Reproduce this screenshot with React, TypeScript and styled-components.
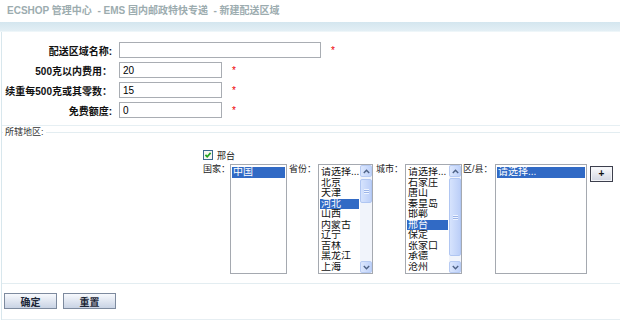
import styled, { createGlobalStyle } from "styled-components";

const GlobalStyle = createGlobalStyle`
  html, body {
    margin: 0;
    padding: 0;
    background: #fff;
  }
  body {
    font-family: "Liberation Sans", "Noto Sans CJK SC", sans-serif;
    font-size: 10px;
    color: #000;
    overflow: hidden;
  }
`;

const Title = styled.h1`
  margin: 0;
  height: 22px;
  padding-left: 7px;
  font-size: 10px;
  line-height: 22px;
  font-weight: bold;
  color: #9cacaf;
  white-space: pre;
`;

const Band = styled.div`
  height: 9px;
  background: linear-gradient(#d4e6ef, #e3eff5);
  border-bottom: 1px solid #eef6f9;
`;

const Panel = styled.div`
  margin-left: 1px;
  border-left: 1px solid #d8e7ed;
  padding-top: 8px;
`;

const FormGrid = styled.div`
  display: grid;
  grid-template-columns: 110px auto;
  column-gap: 7px;
  grid-auto-rows: 20px;
  align-items: center;
  padding-bottom: 5px;
  border-bottom: 1px solid #e6eff3;
`;

const FieldLabel = styled.div`
  text-align: right;
  font-weight: bold;
  font-size: 10px;
  color: #111;
  white-space: nowrap;
`;

const FieldCell = styled.div`
  display: flex;
  align-items: center;
`;

const TextInput = styled.input<{ $w: number }>`
  box-sizing: border-box;
  width: ${(p) => p.$w}px;
  height: 16px;
  margin: 0;
  border: 1px solid #a9adb3;
  padding: 0 3px;
  font: 10px "Liberation Sans", sans-serif;
  color: #000;
  background: #fff;
  outline: none;
`;

const Required = styled.span`
  margin-left: 10px;
  color: #e00;
  font-size: 10px;
`;

const Area = styled.fieldset`
  margin: 0;
  padding: 12px 0 9px;
  border: none;
  border-top: 1px solid #e3edf1;
  border-bottom: 1px solid #e3edf1;
`;

const Legend = styled.legend`
  margin-left: 1px;
  padding: 0 2px;
  font-size: 9px;
  line-height: 12px;
  color: #333;
`;

const RegionBlock = styled.div`
  margin-left: 201px;
`;

const CheckRow = styled.label`
  display: flex;
  align-items: center;
  gap: 4px;
  height: 10px;
  margin-bottom: 4px;
  font-size: 9px;
  color: #222;
`;

const RegionRow = styled.div`
  display: flex;
  align-items: flex-start;
`;

const RegionLabel = styled.div<{ $w: number; $pad: number }>`
  box-sizing: border-box;
  width: ${(p) => p.$w}px;
  padding-left: ${(p) => p.$pad}px;
  font-size: 9px;
  line-height: 10px;
  white-space: nowrap;
  color: #222;
`;

const ListBox = styled.div<{ $w: number }>`
  box-sizing: border-box;
  display: flex;
  width: ${(p) => p.$w}px;
  height: 110px;
  border: 1px solid #a5a9b0;
  background: #fff;
  overflow: hidden;
`;

const Options = styled.div`
  flex: 1;
  min-width: 0;
  padding: 2px 1px 0 1px;
`;

const Option = styled.div<{ $selected?: boolean }>`
  height: 10.56px;
  line-height: 10.56px;
  padding-left: 1px;
  font-size: 10px;
  white-space: nowrap;
  overflow: hidden;
  background: ${(p) => (p.$selected ? "#316ac5" : "transparent")};
  color: ${(p) => (p.$selected ? "#fff" : "#111")};
`;

const ScrollBar = styled.div`
  display: flex;
  flex-direction: column;
  width: 12px;
  background: #f1f4fb;
`;

const ScrollButton = styled.div`
  box-sizing: border-box;
  display: flex;
  align-items: center;
  justify-content: center;
  height: 12px;
  border: 1px solid #b7cbf3;
  border-radius: 2px;
  background: linear-gradient(90deg, #dce7fd, #bfd2fa);
`;

const Track = styled.div`
  flex: 1;
`;

const Thumb = styled.div<{ $top: number; $h: number }>`
  box-sizing: border-box;
  margin-top: ${(p) => p.$top}px;
  height: ${(p) => p.$h}px;
  border: 1px solid #b0c6f2;
  border-radius: 2px;
  background: linear-gradient(90deg, #d6e3fd, #bccff8);
  display: flex;
  align-items: center;
  justify-content: center;
`;

const Grip = styled.div`
  width: 5px;
  height: 5px;
  background: repeating-linear-gradient(#eef4ff 0 1px, #9cb4e8 1px 2px);
`;

const PlusButton = styled.button`
  box-sizing: border-box;
  margin: 2px 0 0 3px;
  width: 23px;
  height: 16px;
  padding: 0;
  border: 1px solid #3d3f4d;
  box-shadow: inset 0 0 0 1px #f4f5f8;
  background: linear-gradient(#fbfbfd, #d3d7e3);
  font: bold 10px "Liberation Sans", sans-serif;
  line-height: 12px;
  color: #111;
`;

const ButtonBar = styled.div`
  display: flex;
  gap: 6px;
  padding: 9px 2px 10px;
  border-bottom: 1px solid #e6eef2;
`;

const ActionButton = styled.button`
  box-sizing: border-box;
  width: 53px;
  height: 16px;
  padding: 0;
  border: 1px solid #7d8a9e;
  background: linear-gradient(#f7f9fd, #c9d3e4);
  font: bold 10px "Liberation Sans", "Noto Sans CJK SC", sans-serif;
  color: #1c2636;
`;

type ListProps = {
  width: number;
  items: string[];
  selected: number;
  thumb?: { top: number; h: number };
};

function Arrow({ up }: { up?: boolean }) {
  return (
    <svg width="7" height="5" viewBox="0 0 7 5">
      <path
        d={up ? "M0.8 4 L3.5 1.3 L6.2 4" : "M0.8 1 L3.5 3.7 L6.2 1"}
        stroke="#4d6185"
        strokeWidth="1.4"
        fill="none"
      />
    </svg>
  );
}

function RegionList({ width, items, selected, thumb }: ListProps) {
  return (
    <ListBox $w={width}>
      <Options>
        {items.map((item, i) => (
          <Option key={item} $selected={i === selected}>
            {item}
          </Option>
        ))}
      </Options>
      {thumb && (
        <ScrollBar>
          <ScrollButton>
            <Arrow up />
          </ScrollButton>
          <Track>
            <Thumb $top={thumb.top} $h={thumb.h}>
              <Grip />
            </Thumb>
          </Track>
          <ScrollButton>
            <Arrow />
          </ScrollButton>
        </ScrollBar>
      )}
    </ListBox>
  );
}

function CheckMark() {
  return (
    <svg width="10" height="10" viewBox="0 0 10 10">
      <rect x="0.5" y="0.5" width="9" height="9" fill="#f6f6f2" stroke="#3b6a8f" />
      <path d="M2.4 4.8 L4.2 6.7 L7.6 2.9" stroke="#22a322" strokeWidth="1.7" fill="none" />
    </svg>
  );
}

const provinces = ["请选择...", "北京", "天津", "河北", "山西", "内蒙古", "辽宁", "吉林", "黑龙江", "上海"];
const cities = ["请选择...", "石家庄", "唐山", "秦皇岛", "邯郸", "邢台", "保定", "张家口", "承德", "沧州"];

export default function App() {
  return (
    <>
      <GlobalStyle />
      <Title>ECSHOP 管理中心  - EMS 国内邮政特快专递  - 新建配送区域</Title>
      <Band />
      <Panel>
        <FormGrid>
          <FieldLabel>配送区域名称:</FieldLabel>
          <FieldCell>
            <TextInput $w={202} defaultValue="" />
            <Required>*</Required>
          </FieldCell>
          <FieldLabel>500克以内费用：</FieldLabel>
          <FieldCell>
            <TextInput $w={103} defaultValue="20" />
            <Required>*</Required>
          </FieldCell>
          <FieldLabel>续重每500克或其零数：</FieldLabel>
          <FieldCell>
            <TextInput $w={103} defaultValue="15" />
            <Required>*</Required>
          </FieldCell>
          <FieldLabel>免费额度:</FieldLabel>
          <FieldCell>
            <TextInput $w={103} defaultValue="0" />
            <Required>*</Required>
          </FieldCell>
        </FormGrid>

        <Area>
          <Legend>所辖地区:</Legend>
          <RegionBlock>
            <CheckRow>
              <CheckMark />
              邢台
            </CheckRow>
            <RegionRow>
              <RegionLabel $w={27} $pad={0}>国家：</RegionLabel>
              <RegionList width={57} items={["中国"]} selected={0} />
              <RegionLabel $w={31} $pad={2}>省份：</RegionLabel>
              <RegionList width={55} items={provinces} selected={3} thumb={{ top: 2, h: 24 }} />
              <RegionLabel $w={32} $pad={3}>城市：</RegionLabel>
              <RegionList width={57} items={cities} selected={5} thumb={{ top: 1, h: 78 }} />
              <RegionLabel $w={33} $pad={1}>区/县：</RegionLabel>
              <RegionList width={92} items={["请选择..."]} selected={0} />
              <PlusButton>+</PlusButton>
            </RegionRow>
          </RegionBlock>
        </Area>

        <ButtonBar>
          <ActionButton>确定</ActionButton>
          <ActionButton>重置</ActionButton>
        </ButtonBar>
      </Panel>
    </>
  );
}
